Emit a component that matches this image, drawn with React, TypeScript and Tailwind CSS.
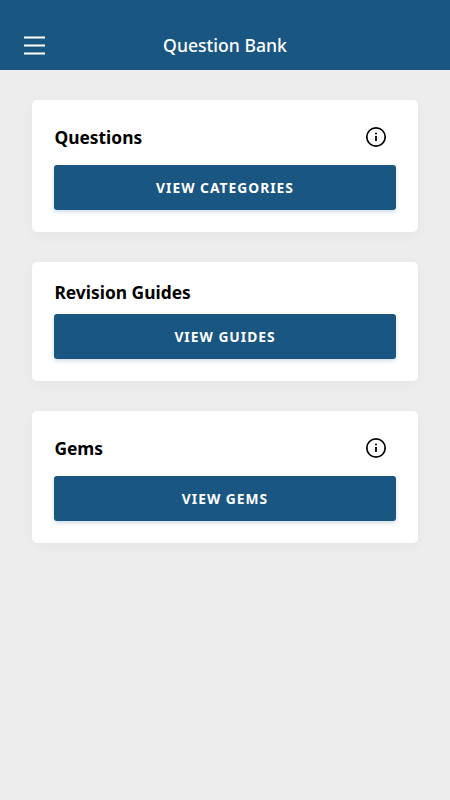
import React from "react";

function InfoIcon() {
  return (
    <svg className="mr-[9px] h-[22px] w-[22px]" viewBox="0 0 22 22" fill="none" stroke="#000" aria-label="Information">
      <circle cx="11" cy="11" r="9.2" strokeWidth="1.7" />
      <path d="M11 10V15" strokeWidth="1.8" />
      <circle cx="11" cy="7.4" r="1" fill="#000" stroke="none" />
    </svg>
  );
}

function MenuIcon() {
  return (
    <svg className="h-[20px] w-[21px]" viewBox="0 0 21 20" fill="none" stroke="#fff" strokeWidth="2.2">
      <path d="M0 1.5H21M0 9.5H21M0 17.5H21" />
    </svg>
  );
}

type CardProps = { title: string; action: string; info?: boolean };

function Card({ title, action, info = false }: CardProps) {
  return (
    <section className={`rounded-[5px] bg-white px-[22px] shadow-[0_3px_14px_rgba(0,0,0,0.04)] ${info ? "h-[131.5px] pt-[15px]" : "h-[118.5px] pt-[16px]"}`}>
      <div className={`flex items-start justify-between ${info ? "h-[50px] pt-[11px]" : "h-[36px] pt-[3px]"}`}>
        <h2 className="text-[17.4px] leading-[22px] font-bold text-black">{title}</h2>
        {info && <InfoIcon />}
      </div>
      <button className="flex h-[45px] w-full items-center justify-center rounded-[3px] bg-[#195681] pt-px text-[13.8px] font-bold tracking-[1px] text-white shadow-[0_2px_4px_rgba(25,86,129,0.2)]">
        {action}
      </button>
    </section>
  );
}

export default function App() {
  return (
    <div className="h-[800px] w-[450px] overflow-hidden bg-[#ededed] font-['Noto_Sans',sans-serif]">
      <header className="grid h-[69.5px] grid-cols-[1fr_auto_1fr] items-start bg-[#195681] px-6 pt-9 text-white">
        <button aria-label="Menu" className="w-[21px]">
          <MenuIcon />
        </button>
        <h1 className="text-[17.6px] leading-[18px] font-medium">Question Bank</h1>
      </header>
      <main className="flex flex-col gap-[30.5px] px-[32.4px] pt-[30.5px]">
        <Card title="Questions" action="VIEW CATEGORIES" info />
        <Card title="Revision Guides" action="VIEW GUIDES" />
        <Card title="Gems" action="VIEW GEMS" info />
      </main>
    </div>
  );
}
